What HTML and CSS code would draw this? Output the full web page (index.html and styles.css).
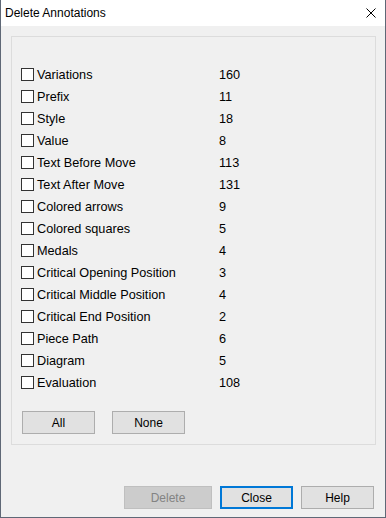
FILE: index.html
```html
<!DOCTYPE html>
<html lang="en">
<head>
  <meta charset="UTF-8" />
  <title>Delete Annotations</title>
  <link rel="stylesheet" href="styles.css">
</head>
<body>
  <div class="window">
    <!-- TITLE BAR -->
    <div class="titlebar">
      <span class="title">Delete Annotations</span>
      <svg class="close-x" width="10" height="10" viewBox="0 0 10 10">
        <path d="M0.5 0.5 L9.5 9.5 M9.5 0.5 L0.5 9.5" stroke="#000" stroke-width="1" fill="none" />
      </svg>
    </div>

    <!-- CLIENT AREA -->
    <div class="client">
      <div class="groupbox">
        <div class="list">
          <label class="row"><span class="check"></span><span class="name">Variations</span><span class="count">160</span></label>
          <label class="row"><span class="check"></span><span class="name">Prefix</span><span class="count">11</span></label>
          <label class="row"><span class="check"></span><span class="name">Style</span><span class="count">18</span></label>
          <label class="row"><span class="check"></span><span class="name">Value</span><span class="count">8</span></label>
          <label class="row"><span class="check"></span><span class="name">Text Before Move</span><span class="count">113</span></label>
          <label class="row"><span class="check"></span><span class="name">Text After Move</span><span class="count">131</span></label>
          <label class="row"><span class="check"></span><span class="name">Colored arrows</span><span class="count">9</span></label>
          <label class="row"><span class="check"></span><span class="name">Colored squares</span><span class="count">5</span></label>
          <label class="row"><span class="check"></span><span class="name">Medals</span><span class="count">4</span></label>
          <label class="row"><span class="check"></span><span class="name">Critical Opening Position</span><span class="count">3</span></label>
          <label class="row"><span class="check"></span><span class="name">Critical Middle Position</span><span class="count">4</span></label>
          <label class="row"><span class="check"></span><span class="name">Critical End Position</span><span class="count">2</span></label>
          <label class="row"><span class="check"></span><span class="name">Piece Path</span><span class="count">6</span></label>
          <label class="row"><span class="check"></span><span class="name">Diagram</span><span class="count">5</span></label>
          <label class="row"><span class="check"></span><span class="name">Evaluation</span><span class="count">108</span></label>
        </div>

        <div class="select-buttons">
          <button class="btn">All</button>
          <button class="btn">None</button>
        </div>
      </div>

      <!-- DIALOG BUTTONS -->
      <div class="dialog-buttons">
        <button class="btn btn-wide" disabled>Delete</button>
        <button class="btn btn-default">Close</button>
        <button class="btn">Help</button>
      </div>
    </div>
  </div>
</body>
</html>
```

FILE: styles.css
```css
* {
  margin: 0;
  padding: 0;
  box-sizing: border-box;
}

html,
body {
  width: 386px;
  height: 518px;
  overflow: hidden;
  background: #f0f0f0;
  font-family: 'Liberation Sans', Arial, sans-serif;
  color: #000;
}

/* window frame */
.window {
  width: 386px;
  height: 518px;
  display: flex;
  flex-direction: column;
  border-left: 1px solid #5f6876;
  border-right: 1px solid #5f6876;
  border-bottom: 1px solid #5f6876;
}

.titlebar {
  height: 26px;
  background: #fff;
  display: flex;
  align-items: center;
  justify-content: space-between;
  padding: 0 9px 0 4px;
}

.title {
  font-size: 12px;
  line-height: 14px;
}

.close-x {
  display: block;
}

.client {
  flex: 1;
  display: flex;
  flex-direction: column;
  padding: 10px 9px 0 10px;
}

/* group box with the annotation list */
.groupbox {
  border: 1px solid #dcdcdc;
  padding: 27px 9px 10px 9px;
}

.list {
  display: flex;
  flex-direction: column;
}

.row {
  height: 22px;
  display: flex;
  align-items: center;
  font-size: 12.7px;
}

.check {
  width: 13px;
  height: 13px;
  border: 1px solid #333;
  background: #fff;
  margin-top: -1px;
  flex: none;
}

.name {
  width: 185px;
  padding-left: 3px;
}

.select-buttons {
  display: flex;
  gap: 17px;
  margin-top: 17px;
  padding-left: 1px;
}

/* push buttons */
.btn {
  width: 73px;
  height: 23px;
  border: 1px solid #adadad;
  background: #e1e1e1;
  font-family: 'Liberation Sans', Arial, sans-serif;
  font-size: 12px;
  color: #000;
}

.btn-wide {
  width: 88px;
}

.btn:disabled {
  background: #cccccc;
  border-color: #bfbfbf;
  color: #838383;
}

.btn-default {
  border: 2px solid #0078d7;
}

.dialog-buttons {
  display: flex;
  justify-content: flex-end;
  gap: 8px;
  margin-top: 41px;
  padding-right: 2px;
}
```
